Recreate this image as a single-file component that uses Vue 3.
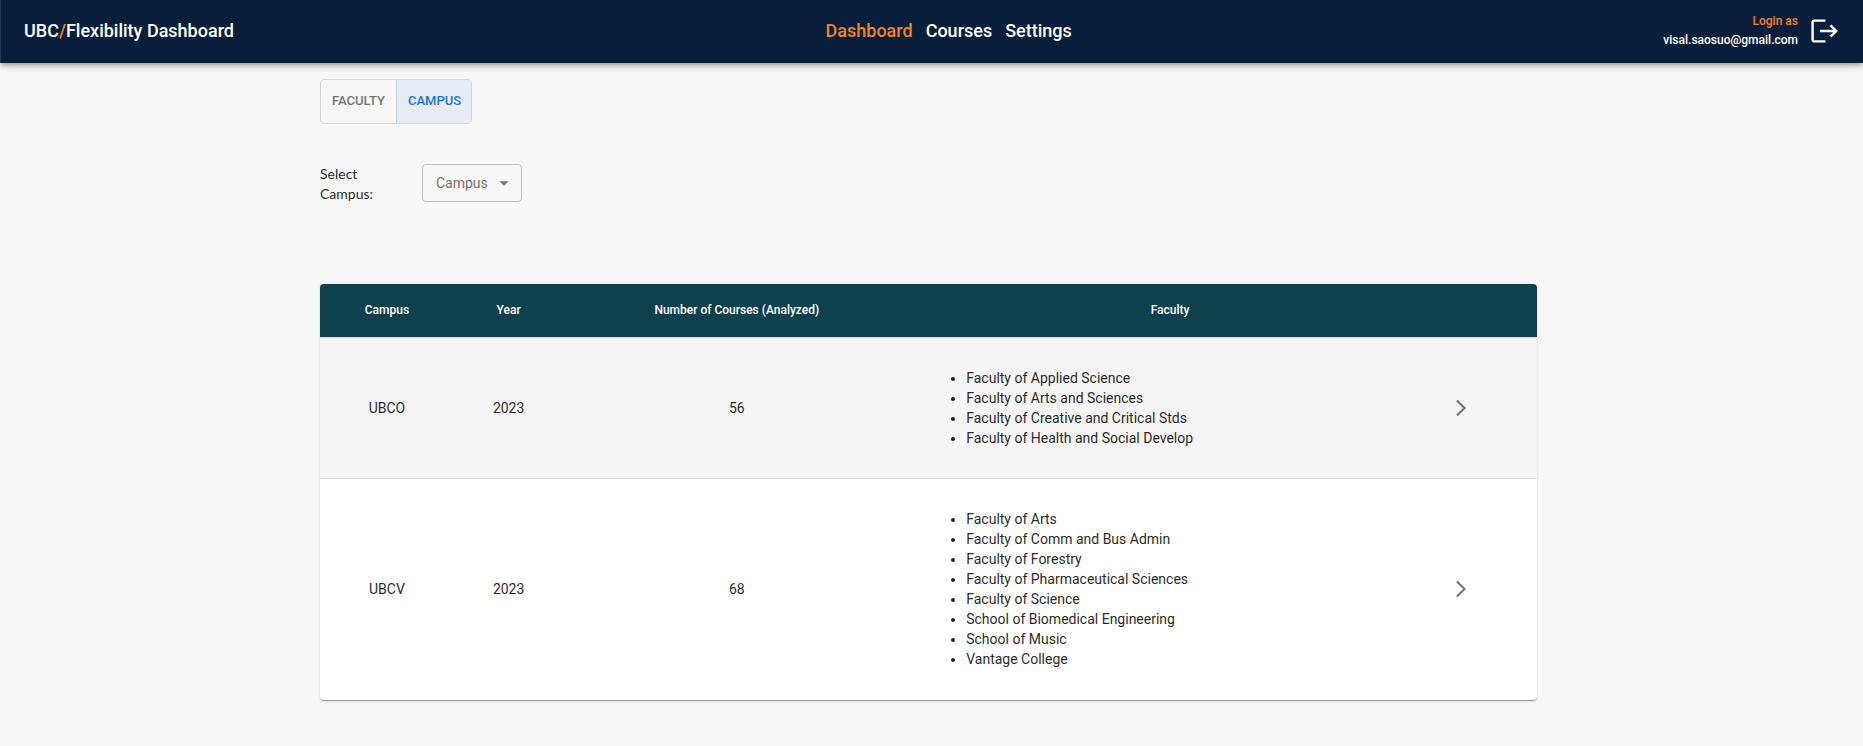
<script setup>
import { ref } from 'vue'

const links = ['Dashboard', 'Courses', 'Settings']
const view = ref('Campus')
const views = ['Faculty', 'Campus']
const campus = ref('')

const rows = [
  {
    campus: 'UBCO',
    year: 2023,
    courses: 56,
    faculties: [
      'Faculty of Applied Science',
      'Faculty of Arts and Sciences',
      'Faculty of Creative and Critical Stds',
      'Faculty of Health and Social Develop',
    ],
  },
  {
    campus: 'UBCV',
    year: 2023,
    courses: 68,
    faculties: [
      'Faculty of Arts',
      'Faculty of Comm and Bus Admin',
      'Faculty of Forestry',
      'Faculty of Pharmaceutical Sciences',
      'Faculty of Science',
      'School of Biomedical Engineering',
      'School of Music',
      'Vantage College',
    ],
  },
]
</script>

<template>
  <div class="page">
    <header class="bar">
      <div class="brand">UBC<span class="accent">/</span>Flexibility Dashboard</div>
      <nav class="nav">
        <a v-for="(link, i) in links" :key="link" href="#" :class="{ accent: i === 0 }">{{ link }}</a>
      </nav>
      <div class="account">
        <div class="who">
          <span class="accent">Login as</span>
          <span>visal.saosuo@gmail.com</span>
        </div>
        <button class="logout" type="button" aria-label="Log out">
          <svg viewBox="0 0 28 28" width="28" height="28" fill="none" stroke="#fff" stroke-width="2.4">
            <path d="M15.5 3.6H4.4a1.8 1.8 0 0 0-1.8 1.8v17.2a1.8 1.8 0 0 0 1.8 1.8h11.1" />
            <path d="M10 14H26M20.6 8.4l5.6 5.6-5.6 5.6" />
          </svg>
        </button>
      </div>
    </header>

    <main class="content">
      <div class="toggle" role="group" aria-label="View by">
        <button
          v-for="v in views"
          :key="v"
          type="button"
          :class="{ on: view === v }"
          :aria-pressed="view === v"
          @click="view = v"
        >{{ v }}</button>
      </div>

      <div class="filter">
        <label for="campus">Select Campus:</label>
        <div class="select">
          <select id="campus" v-model="campus">
            <option value="">Campus</option>
            <option v-for="r in rows" :key="r.campus">{{ r.campus }}</option>
          </select>
          <svg class="caret" viewBox="0 0 24 24" width="22" height="22" aria-hidden="true">
            <path d="M7 10l5 5 5-5z" fill="#757575" />
          </svg>
        </div>
      </div>

      <table class="table">
        <colgroup>
          <col class="c-campus" />
          <col class="c-year" />
          <col class="c-courses" />
          <col class="c-faculty" />
          <col />
        </colgroup>
        <thead>
          <tr>
            <th>Campus</th>
            <th>Year</th>
            <th>Number of Courses (Analyzed)</th>
            <th>Faculty</th>
            <th></th>
          </tr>
        </thead>
        <tbody>
          <tr v-for="r in rows" :key="r.campus">
            <td>{{ r.campus }}</td>
            <td>{{ r.year }}</td>
            <td>{{ r.courses }}</td>
            <td>
              <ul>
                <li v-for="f in r.faculties" :key="f">{{ f }}</li>
              </ul>
            </td>
            <td class="go">
              <button type="button" :aria-label="'Open ' + r.campus">
                <svg viewBox="0 0 24 24" width="20" height="20">
                  <path d="M6.23 20.23 8 22l10-10L8 2 6.23 3.77 14.46 12z" fill="#757575" />
                </svg>
              </button>
            </td>
          </tr>
        </tbody>
      </table>
    </main>
  </div>
</template>

<style>
body {
  margin: 0;
  background: #f7f7f7;
}
</style>

<style scoped>
.page {
  min-height: 100vh;
  font-family: Roboto, sans-serif;
  font-size: 14px;
  line-height: 20px;
  color: rgba(0, 0, 0, 0.87);
}
button {
  font: inherit;
  background: none;
  border: 0;
  padding: 0;
  cursor: pointer;
}
svg {
  display: block;
}
.bar {
  display: flex;
  justify-content: space-between;
  align-items: center;
  height: 63px;
  padding: 0 25px 2px 23px;
  border-left: 1px solid #223650;
  background: #081f3b;
  color: #fff;
  font-weight: 500;
  box-sizing: border-box;
  box-shadow: 0 2px 4px -1px rgba(0, 0, 0, 0.2), 0 4px 5px rgba(0, 0, 0, 0.14), 0 1px 10px rgba(0, 0, 0, 0.12);
}
.brand,
.nav {
  font-size: 18px;
  line-height: 24px;
}
.nav {
  display: flex;
  gap: 13px;
}
.nav a {
  color: #fff;
  text-decoration: none;
}
.accent,
.nav a.accent {
  color: #f58429;
}
.account {
  display: flex;
  align-items: center;
  gap: 12px;
}
.who {
  display: flex;
  flex-direction: column;
  text-align: right;
  font-size: 12px;
  line-height: 19px;
}
.content {
  max-width: 1217px;
  margin: 0 auto;
  padding: 16px 6px 0 0;
}
.toggle {
  display: inline-flex;
  border: 1px solid #d6d6d6;
  border-radius: 4px;
  overflow: hidden;
}
.toggle button {
  padding: 10px 11px 12px;
  font-size: 13px;
  line-height: 21px;
  font-weight: 500;
  text-transform: uppercase;
  color: #757575;
}
.toggle button.on {
  padding-right: 10px;
  background: #e6edf6;
  color: #1976d2;
  border-left: 1px solid #c8d0da;
}
.filter {
  display: flex;
  margin-top: 40px;
  gap: 32px;
}
.filter label {
  width: 70px;
  font-family: Lato, sans-serif;
}
.select {
  position: relative;
}
.select select {
  appearance: none;
  width: 100px;
  height: 38px;
  padding: 0 32px 0 13px;
  border: 1px solid #bdbdbd;
  border-radius: 4px;
  background: none;
  font: inherit;
  color: #757575;
}
.caret {
  position: absolute;
  right: 7px;
  top: 8px;
  pointer-events: none;
}
.table {
  width: 100%;
  margin-top: 80px;
  table-layout: fixed;
  border-spacing: 0;
  border-radius: 4px;
  overflow: hidden;
  background: #fff;
  box-shadow: 0 2px 1px -1px rgba(0, 0, 0, 0.2), 0 1px 1px rgba(0, 0, 0, 0.14), 0 1px 3px rgba(0, 0, 0, 0.12);
}
.c-campus {
  width: 11%;
}
.c-year {
  width: 9%;
}
.c-courses {
  width: 28.5%;
}
.c-faculty {
  width: 42.7%;
}
th,
td {
  padding: 16px;
  text-align: center;
  border-bottom: 1px solid #dcdcdc;
}
th {
  background: #0e414e;
  background-clip: padding-box;
  color: #fff;
  font-size: 12px;
  line-height: 21px;
  font-weight: 500;
}
tbody tr:first-child {
  background: #f5f5f5;
}
tbody tr:last-child td {
  border-bottom-color: transparent;
}
ul {
  margin: 14px 0;
  padding-left: 40px;
  text-align: left;
}
.go button {
  display: block;
  margin-left: 5px;
}
</style>
